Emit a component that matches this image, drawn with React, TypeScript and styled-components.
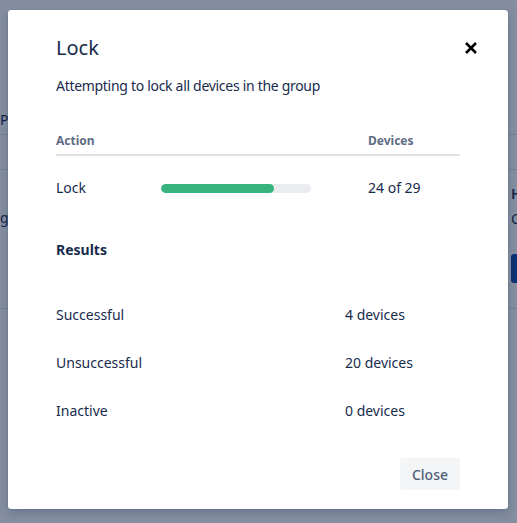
import React from "react";
import styled, { createGlobalStyle } from "styled-components";

const Global = createGlobalStyle`
  html, body { margin: 0; padding: 0; }
  body {
    width: 517px;
    height: 523px;
    overflow: hidden;
    font-family: "Noto Sans", "Open Sans", sans-serif;
    color: #172b4d;
    background: #ffffff;
  }
`;

const Page = styled.div`
  position: relative;
  width: 517px;
  height: 523px;
  overflow: hidden;
  background: #ffffff;
`;

const PageContent = styled.div`
  display: flex;
  flex-direction: column;
  padding-top: 110px;
`;

const PageRow = styled.div<{ $h: number }>`
  height: ${(p) => p.$h}px;
  border-bottom: 1px solid #e3e5ea;
  display: flex;
  justify-content: space-between;
  box-sizing: border-box;
`;

const PageText = styled.span<{ $bold?: boolean; $top: number }>`
  font-size: 14px;
  margin-top: ${(p) => p.$top}px;
  font-weight: ${(p) => (p.$bold ? 600 : 400)};
  color: #172b4d;
  white-space: nowrap;
`;

const RightCol = styled.div`
  display: flex;
  flex-direction: column;
  align-items: flex-start;
  width: 6px;
  margin-top: 10px;
  gap: 6px;
`;

const BlueButton = styled.div`
  width: 60px;
  height: 29px;
  margin-top: 20px;
  background: #0747a6;
  border-radius: 3px;
`;

const Overlay = styled.div`
  position: absolute;
  inset: 0;
  background: rgba(9, 30, 66, 0.5);
`;

const Modal = styled.div`
  position: absolute;
  left: 8px;
  top: 10px;
  width: 500px;
  height: 499px;
  box-sizing: border-box;
  background: #ffffff;
  border-radius: 3px;
  box-shadow: 0 0 1px rgba(9, 30, 66, 0.3), 0 4px 8px rgba(9, 30, 66, 0.2);
  padding: 24px 48px 19px 48px;
  display: flex;
  flex-direction: column;
`;

const Header = styled.div`
  display: flex;
  justify-content: space-between;
  align-items: center;
  height: 28px;
`;

const Title = styled.h1`
  margin: 0;
  font-size: 20px;
  font-weight: 400;
  color: #172b4d;
  line-height: 28px;
`;

const CloseIcon = styled.button`
  border: 0;
  background: none;
  padding: 0;
  margin-right: -18px;
  width: 14px;
  height: 14px;
  display: flex;
  cursor: pointer;
`;

const Subtitle = styled.p`
  margin: 14px 0 0;
  font-size: 14px;
  line-height: 20px;
  letter-spacing: -0.3px;
  color: #172b4d;
`;

const Table = styled.div`
  margin-top: 38px;
  display: flex;
  flex-direction: column;
`;

const Grid = styled.div`
  display: grid;
  grid-template-columns: 105px 207px 1fr;
  align-items: center;
`;

const HeadRow = styled(Grid)`
  height: 20px;
  border-bottom: 2px solid #dfe1e6;
  align-items: start;
`;

const HeadCell = styled.span`
  font-size: 12px;
  font-weight: 700;
  color: #5e6c84;
  line-height: 14px;
`;

const BodyRow = styled(Grid)`
  height: 64px;
`;

const Cell = styled.span`
  font-size: 14px;
  line-height: 20px;
  color: #172b4d;
`;

const Track = styled.div`
  width: 150px;
  height: 9px;
  border-radius: 5px;
  background: #ebecf0;
  overflow: hidden;
`;

const Fill = styled.div`
  height: 100%;
  border-radius: 5px;
  background: #36b37e;
`;

const SectionTitle = styled.h2`
  margin: 20px 0 0;
  font-size: 14px;
  line-height: 20px;
  font-weight: 700;
  color: #172b4d;
`;

const Results = styled.div`
  margin-top: 45px;
  display: flex;
  flex-direction: column;
  gap: 28px;
`;

const ResultRow = styled.div`
  display: grid;
  grid-template-columns: 289px 1fr;
`;

const Footer = styled.div`
  margin-top: auto;
  display: flex;
  justify-content: flex-end;
`;

const Button = styled.button`
  height: 32px;
  padding: 0 12px;
  border: 0;
  border-radius: 3px;
  background: #f4f5f7;
  color: #505f79;
  font-family: inherit;
  font-size: 14px;
  font-weight: 500;
  cursor: pointer;
`;

const results = [
  { label: "Successful", value: "4 devices" },
  { label: "Unsuccessful", value: "20 devices" },
  { label: "Inactive", value: "0 devices" },
];

export default function App() {
  const done = 24;
  const total = 29;
  const pct = 75;
  return (
    <>
      <Global />
      <Page>
        <PageContent>
          <PageRow $h={25}>
            <PageText $top={0}>Po</PageText>
            <span />
          </PageRow>
          <PageRow $h={35}>
            <span />
          </PageRow>
          <PageRow $h={139}>
            <PageText $top={38}>g</PageText>
            <RightCol>
              <PageText $bold $top={4}>H</PageText>
              <PageText $top={0}>C</PageText>
              <BlueButton />
            </RightCol>
          </PageRow>
        </PageContent>
        <Overlay />
        <Modal>
          <Header>
            <Title>Lock</Title>
            <CloseIcon aria-label="Close">
              <svg width="14" height="14" viewBox="0 0 14 14">
                <path d="M2 2 L12 12 M12 2 L2 12" stroke="#000" strokeWidth="2.6" strokeLinecap="butt" />
              </svg>
            </CloseIcon>
          </Header>
          <Subtitle>Attempting to lock all devices in the group</Subtitle>
          <Table>
            <HeadRow>
              <HeadCell>Action</HeadCell>
              <span />
              <HeadCell>Devices</HeadCell>
            </HeadRow>
            <BodyRow>
              <Cell>Lock</Cell>
              <Track>
                <Fill style={{ width: `${pct}%` }} />
              </Track>
              <Cell>
                {done} of {total}
              </Cell>
            </BodyRow>
          </Table>
          <SectionTitle>Results</SectionTitle>
          <Results>
            {results.map((r) => (
              <ResultRow key={r.label}>
                <Cell>{r.label}</Cell>
                <Cell>{r.value}</Cell>
              </ResultRow>
            ))}
          </Results>
          <Footer>
            <Button>Close</Button>
          </Footer>
        </Modal>
      </Page>
    </>
  );
}
